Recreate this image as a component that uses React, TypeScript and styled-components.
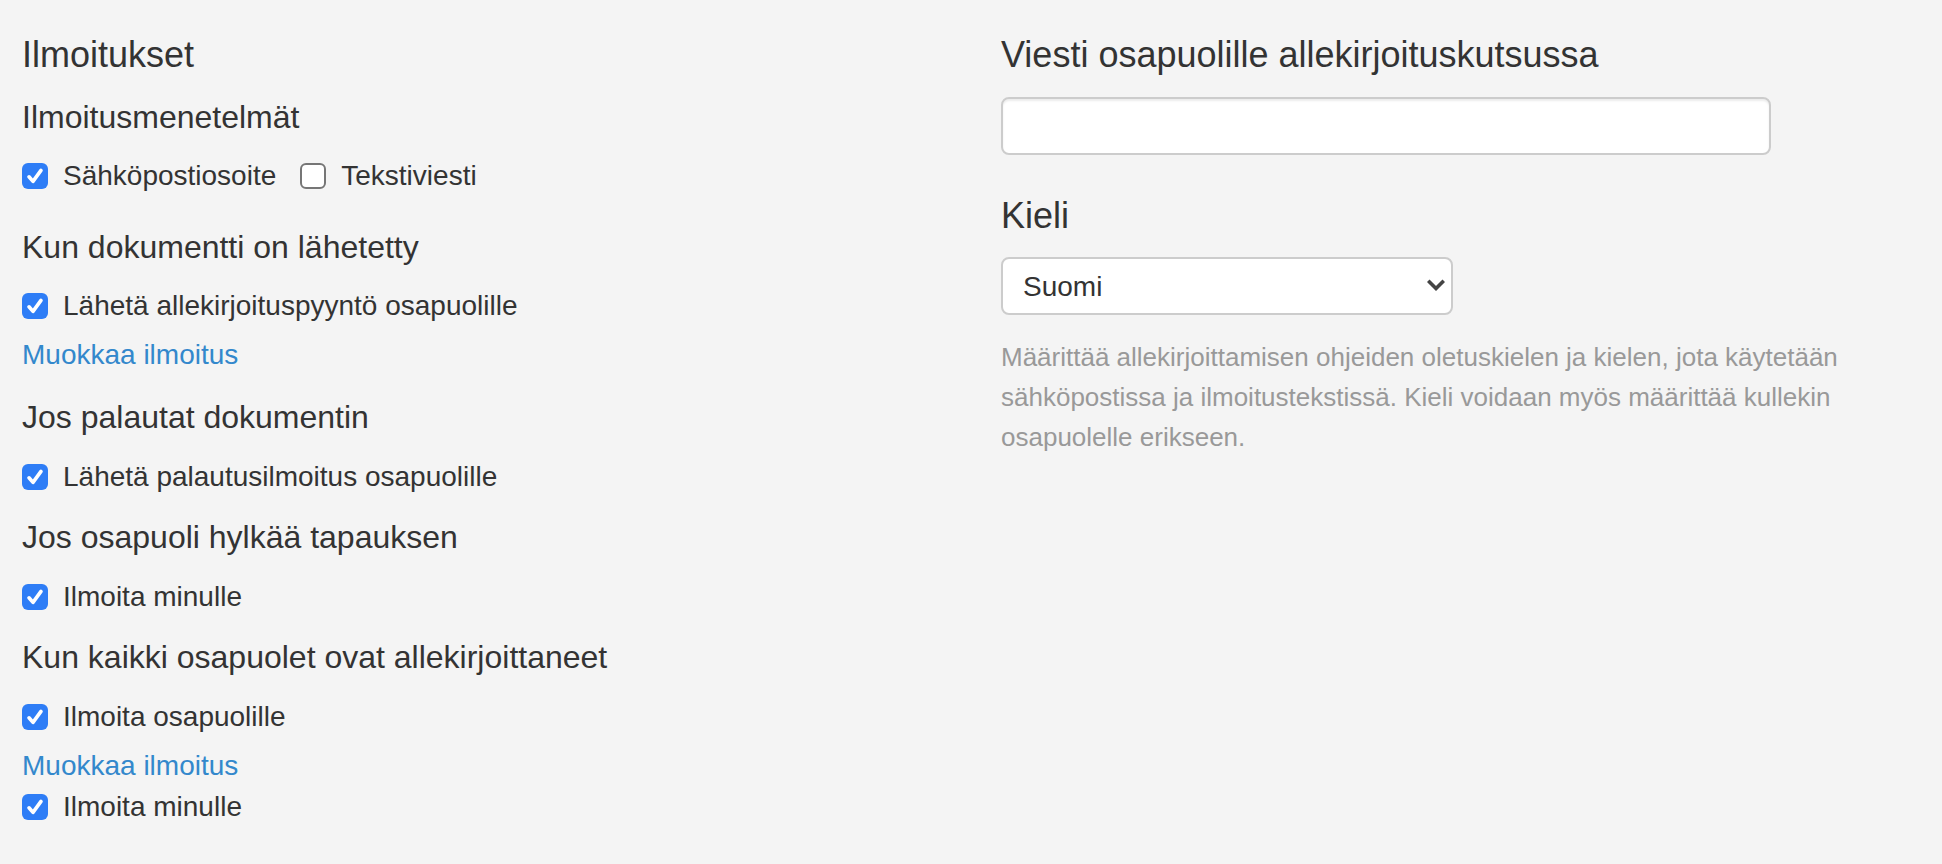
import styled, { createGlobalStyle } from 'styled-components';

const GlobalStyle = createGlobalStyle`
  html, body {
    margin: 0;
    padding: 0;
    background: #f4f4f4;
  }
  body {
    font-family: "Liberation Sans", Arial, Helvetica, sans-serif;
    color: #333;
  }
`;

const Page = styled.div`
  display: grid;
  grid-template-columns: 979px 919px;
  padding: 35px 22px 0;
  min-height: 828px;
`;

const Column = styled.div`
  display: flex;
  flex-direction: column;
  align-items: flex-start;
`;

const Title = styled.h2<{ $gap?: number }>`
  margin: ${p => p.$gap ?? 0}px 0 0;
  font-size: 36px;
  line-height: 40px;
  font-weight: 400;
  color: #333;
`;

const Group = styled.section<{ $gap?: number }>`
  display: flex;
  flex-direction: column;
  align-items: flex-start;
  margin-top: ${p => p.$gap ?? 22}px;
`;

const SubTitle = styled.h3`
  margin: 0;
  font-size: 32px;
  line-height: 36px;
  font-weight: 400;
  color: #333;
`;

const OptionRow = styled.div<{ $gap?: number }>`
  display: flex;
  align-items: center;
  gap: 24px;
  margin-top: ${p => p.$gap ?? 21}px;
`;

const Option = styled.label`
  display: flex;
  align-items: center;
  gap: 15px;
  font-size: 28px;
  line-height: 40px;
  color: #333;
  cursor: pointer;
`;

const Box = styled.span<{ $checked: boolean }>`
  display: inline-flex;
  align-items: center;
  justify-content: center;
  width: 26px;
  height: 26px;
  box-sizing: border-box;
  border-radius: 6px;
  background: ${p => (p.$checked ? '#2e7df6' : '#fff')};
  border: ${p => (p.$checked ? 'none' : '2px solid #767676')};
  flex-shrink: 0;
`;

const EditLink = styled.a`
  margin-top: 9px;
  font-size: 28px;
  line-height: 40px;
  color: #3388cc;
  text-decoration: none;
  cursor: pointer;
`;

const TextInput = styled.input`
  margin-top: 22px;
  width: 770px;
  height: 58px;
  box-sizing: border-box;
  border: 2px solid #cccccc;
  border-radius: 8px;
  background: #fff;
  box-shadow: inset 0 2px 2px rgba(0, 0, 0, 0.075);
  padding: 0 20px;
  font-family: inherit;
  font-size: 28px;
  color: #555;
  outline: none;
`;

const SelectWrap = styled.div`
  position: relative;
  margin-top: 21px;
  width: 452px;
  height: 58px;
`;

const Select = styled.select`
  appearance: none;
  -webkit-appearance: none;
  width: 100%;
  height: 100%;
  box-sizing: border-box;
  border: 2px solid #cccccc;
  border-radius: 8px;
  background: #fff;
  padding: 0 40px 0 20px;
  font-family: inherit;
  font-size: 28px;
  color: #333;
  outline: none;
`;

const Chevron = styled.svg`
  position: absolute;
  right: 8px;
  top: 50%;
  margin-top: -7px;
  width: 18px;
  height: 13px;
  pointer-events: none;
`;

const HelpText = styled.p`
  margin: 22px 0 0;
  font-size: 26px;
  line-height: 40px;
  color: #999;
`;

const Check = ({ checked }: { checked: boolean }) => (
  <Box $checked={checked}>
    {checked && (
      <svg width="26" height="26" viewBox="0 0 26 26">
        <path d="M7 13.8 L11 18.4 L19 7.4" fill="none" stroke="#fff" strokeWidth="3.6" strokeLinecap="round" strokeLinejoin="round" />
      </svg>
    )}
  </Box>
);

const Choice = ({ label, checked = true }: { label: string; checked?: boolean }) => (
  <Option>
    <Check checked={checked} />
    {label}
  </Option>
);

const App = () => (
  <>
    <GlobalStyle />
    <Page>
      <Column>
        <Title>Ilmoitukset</Title>
        <Group $gap={24}>
          <SubTitle>Ilmoitusmenetelmät</SubTitle>
          <OptionRow>
            <Choice label="Sähköpostiosoite" />
            <Choice label="Tekstiviesti" checked={false} />
          </OptionRow>
        </Group>
        <Group $gap={33}>
          <SubTitle>Kun dokumentti on lähetetty</SubTitle>
          <OptionRow>
            <Choice label="Lähetä allekirjoituspyyntö osapuolille" />
          </OptionRow>
          <EditLink>Muokkaa ilmoitus</EditLink>
        </Group>
        <Group $gap={24}>
          <SubTitle>Jos palautat dokumentin</SubTitle>
          <OptionRow $gap={22}>
            <Choice label="Lähetä palautusilmoitus osapuolille" />
          </OptionRow>
        </Group>
        <Group>
          <SubTitle>Jos osapuoli hylkää tapauksen</SubTitle>
          <OptionRow $gap={22}>
            <Choice label="Ilmoita minulle" />
          </OptionRow>
        </Group>
        <Group>
          <SubTitle>Kun kaikki osapuolet ovat allekirjoittaneet</SubTitle>
          <OptionRow $gap={22}>
            <Choice label="Ilmoita osapuolille" />
          </OptionRow>
          <EditLink>Muokkaa ilmoitus</EditLink>
          <OptionRow $gap={1}>
            <Choice label="Ilmoita minulle" />
          </OptionRow>
        </Group>
      </Column>
      <Column>
        <Title>Viesti osapuolille allekirjoituskutsussa</Title>
        <TextInput type="text" />
        <Title $gap={41}>Kieli</Title>
        <SelectWrap>
          <Select defaultValue="fi">
            <option value="fi">Suomi</option>
          </Select>
          <Chevron viewBox="0 0 18 13">
            <path d="M2.5 3 L9 9.5 L15.5 3" fill="none" stroke="#444" strokeWidth="3.6" strokeLinecap="square" />
          </Chevron>
        </SelectWrap>
        <HelpText>
          Määrittää allekirjoittamisen ohjeiden oletuskielen ja kielen, jota käytetään sähköpostissa ja ilmoitustekstissä. Kieli voidaan myös määrittää kullekin osapuolelle erikseen.
        </HelpText>
      </Column>
    </Page>
  </>
);

export default App;
